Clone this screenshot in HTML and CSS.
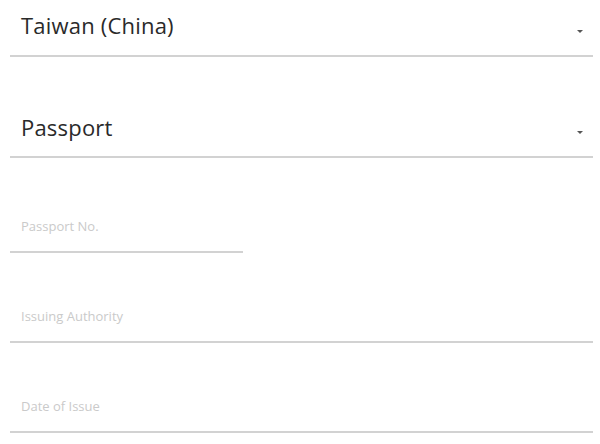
FILE: index.html
```html
<!DOCTYPE html>
<html>
<head>
<meta charset="utf-8">
<link rel="stylesheet" href="styles.css">
</head>
<body>
<form class="form">
  <div class="field select first">
    <span class="value">Taiwan (China)</span>
    <span class="caret"></span>
  </div>
  <div class="field select second">
    <span class="value">Passport</span>
    <span class="caret"></span>
  </div>
  <div class="field input short">
    <span class="placeholder">Passport No.</span>
  </div>
  <div class="field input">
    <span class="placeholder">Issuing Authority</span>
  </div>
  <div class="field input">
    <span class="placeholder">Date of Issue</span>
  </div>
</form>
</body>
</html>
```

FILE: styles.css
```css
html, body {
  margin: 0;
  padding: 0;
  background: #ffffff;
}
body {
  width: 600px;
  height: 444px;
  overflow: hidden;
  font-family: "Open Sans", "Noto Sans", sans-serif;
}
.form {
  display: flex;
  flex-direction: column;
  padding: 0 7px 0 10px;
}
.field {
  height: 55px;
  border-bottom: 2px solid #d2d2d2;
  display: flex;
  align-items: flex-end;
  justify-content: space-between;
  padding: 0 10px 0 11px;
  box-sizing: content-box;
}
.second {
  margin-top: 44px;
}
.input {
  margin-top: 33px;
}
.input.short {
  margin-top: 38px;
  width: 212px;
}
.value {
  font-size: 22px;
  line-height: 22px;
  font-weight: 400;
  letter-spacing: 0.2px;
  color: #2a2a2a;
  padding-bottom: 19px;
}
.second .value {
  padding-bottom: 18px;
}
.placeholder {
  font-size: 13px;
  line-height: 13px;
  color: #cacaca;
  padding-bottom: 18px;
}
.caret {
  width: 0;
  height: 0;
  border-left: 3px solid transparent;
  border-right: 3px solid transparent;
  border-top: 3px solid #555555;
  margin-bottom: 22px;
}
```
